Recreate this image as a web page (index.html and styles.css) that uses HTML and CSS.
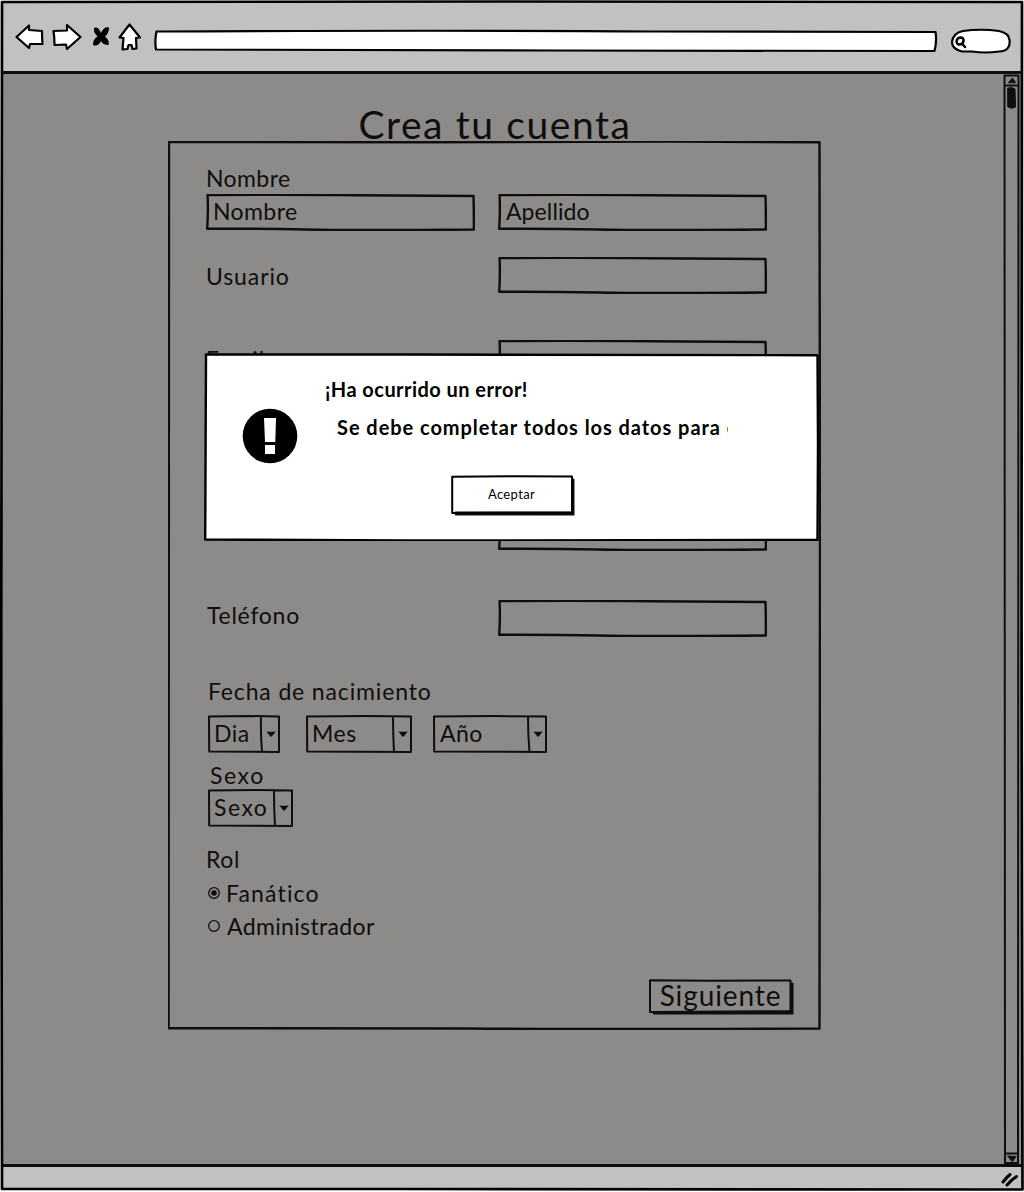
FILE: index.html
```html
<!DOCTYPE html>
<html lang="es">
<head>
<meta charset="utf-8">
<title>Crea tu cuenta</title>
<link rel="stylesheet" href="styles.css">
</head>
<body>
<svg class="defs" width="0" height="0" aria-hidden="true">
  <symbol id="field" viewBox="0 0 269 37" preserveAspectRatio="none">
    <path d="M1.600 1Q90 .6 150 1.200T267.500 2Q268 18 267.800 35.500Q150 36.500 100 35.500T1.200 34.800Q2.300 18 1.600 1Z"/>
  </symbol>
  <symbol id="caret" viewBox="0 0 10 6"><path d="M.3 .4Q5 1.400 9.700.2Q7.500 4 4.800 6Q2.500 3 .3.4Z"/></symbol>
</svg>
<div class="window">
  <svg class="outline" viewBox="0 0 1024 1192" aria-hidden="true">
    <path d="M2 2L500 1.500L1022 2L1021.500 600L1022.500 1189.500Q700 1190.500 400 1189L2 1189L1.200 700L2 2Z"/>
  </svg>
  <header class="toolbar">
    <svg class="nav" width="145" height="40" viewBox="0 0 145 40" aria-label="Navegación">
      <path d="M2.500 20L15 8.500V13L28 14Q28 21 28.500 27H16L15 31Z"/>
      <path d="M39.500 14L53 13.500V8L66.500 20L53 32L52 27.500L40.500 28Q40.500 20 39.500 14Z"/>
      <path class="fill" d="M80 11Q84 9 87 16Q90 9 95 10.500Q95 16 91 19.500Q96 24 94.500 28Q89 28 87 24Q84 30 79 28Q79 22 83.500 19.500Q79 15 80 11Z"/>
      <path d="M115.500 7.500L105.500 20.500L109.500 21L108.500 32.500L113.500 32L114.500 28L117.500 28L118.500 32L122.500 31.500L122 21L126 20.500Z"/>
    </svg>
    <svg class="address" width="786" height="24" viewBox="0 0 786 24" aria-label="Dirección"><path d="M3.500 2.500Q300 1 500 2.500L782.500 3Q784 13 781.500 22L400 21.500L3 20.500Q1.500 12 3.500 2.500Z"/></svg>
    <svg class="search" width="62" height="26" viewBox="0 0 62 26" aria-label="Buscar">
      <path d="M13 3Q31 .5 49 3Q59 5 59.500 12Q61 23 49 23.500Q35 25.500 22 23.500H12Q2 21 2 14Q3 5 13 3Z"/>
      <path class="line" d="M6.500 13.500Q7 9.500 11 9.500Q14 10 13.500 13.500Q12 17 8.500 16.500Q6.500 15.500 6.500 13.500ZM12.500 16L15 19"/>
    </svg>
  </header>
  <main class="page">
    <div class="content">
      <h1>Crea tu cuenta</h1>
      <form class="panel">
        <svg class="sketch" viewBox="0 0 653 889" preserveAspectRatio="none" aria-hidden="true"><path d="M1 .8L250 1.200L500.500.6L651.500 1.200L652 400L651.500 887.500Q400 888.500 300 887.500L.6 887.200L1 .8Z"/></svg>
        <div class="row names">
          <div class="cell"><label>Nombre</label><div class="field"><svg class="sketch"><use href="#field"/></svg>Nombre</div></div>
          <div class="field apellido"><svg class="sketch"><use href="#field"/></svg>Apellido</div>
        </div>
        <div class="row usuario"><label>Usuario</label><div class="field"><svg class="sketch"><use href="#field"/></svg></div></div>
        <div class="row email"><label>Email</label><div class="field"><svg class="sketch"><use href="#field"/></svg></div></div>
        <div class="row password"><div class="field"><svg class="sketch"><use href="#field"/></svg></div></div>
        <div class="row phone"><label>Teléfono</label><div class="field"><svg class="sketch"><use href="#field"/></svg></div></div>
        <label class="birth">Fecha de nacimiento</label>
        <div class="selects">
          <div class="select day"><svg class="sketch" viewBox="0 0 72 38"><path d="M1 1.500L40 1L71 1.500V37L1.200 36.500ZM53 1.500Q52.500 20 54 37"/></svg><span>Dia</span><svg class="caret"><use href="#caret"/></svg></div>
          <div class="select month"><svg class="sketch" viewBox="0 0 106 38"><path d="M1 1.500L60 1L105 1.500V37L1.200 36.500ZM87 1.500Q87 20 88 37"/></svg><span>Mes</span><svg class="caret"><use href="#caret"/></svg></div>
          <div class="select year"><svg class="sketch" viewBox="0 0 114 38"><path d="M1 1.500L60 1L113 1.500V37L1.200 36.500ZM95 1.500Q95 20 96.500 37"/></svg><span>Año</span><svg class="caret"><use href="#caret"/></svg></div>
        </div>
        <label class="sex">Sexo</label>
        <div class="select gender"><svg class="sketch" viewBox="0 0 85 38"><path d="M1 1.500L50 1L84 1.500V37L1.200 36.500ZM66 1.500Q66 20 67 37"/></svg><span>Sexo</span><svg class="caret"><use href="#caret"/></svg></div>
        <label class="role">Rol</label>
        <div class="radio"><svg width="12" height="12" viewBox="0 0 12 12"><circle cx="6" cy="6" r="5.300"/><circle class="dot" cx="6" cy="6" r="2.800"/></svg><label class="fan">Fanático</label></div>
        <div class="radio second"><svg width="12" height="12" viewBox="0 0 12 12"><circle cx="6" cy="6" r="5.300"/></svg><label class="admin">Administrador</label></div>
        <div class="button next"><svg class="sketch" viewBox="0 0 145 36"><path class="shadow" d="M4 32H141V3L144.500 4V35.500H4Z"/><path d="M1 1.200L60 1.800L141.500 1.500V32L1 33Z"/></svg>Siguiente</div>
      </form>
    </div>
    <svg class="scrollbar" width="18" height="1090" viewBox="0 0 18 1090" aria-hidden="true">
      <path d="M1.500 1.500H15.500L15 1089H2ZM1.500 11.500H15M2 1079.500H15"/>
      <path class="fill" d="M5.500 8.500L9.500 4L12.500 8.500ZM5 1082L13 1082.500L9.500 1087.500ZM5 14Q9 12.500 12 15L12.500 33Q9 35.500 5 33Z"/>
    </svg>
  </main>
  <footer class="status">
    <svg width="18" height="16" viewBox="0 0 18 16" aria-hidden="true"><path d="M2 10Q5 6 9 2.500M6 13Q10 8 15.500 4.500"/></svg>
  </footer>
  <section class="dialog" role="alertdialog">
    <svg class="sketch" viewBox="0 0 615 188" preserveAspectRatio="none" aria-hidden="true"><path d="M2 1.500L200 1.500L613.500 2.200L614 90L613.500 187L200 187.500L1.200 186.500L2 1.500Z"/></svg>
    <svg class="alert" width="56" height="56" viewBox="0 0 56 56" aria-hidden="true"><circle cx="28" cy="28" r="27.300"/><path d="M22 10H34L33.300 34H23ZM23 37H33V46H23Z"/></svg>
    <div class="message">
      <strong class="heading">¡Ha ocurrido un error!</strong>
      <strong class="detail">Se debe completar todos los datos para c</strong>
      <div class="button accept"><svg class="sketch" viewBox="0 0 124 41"><path class="shadow" d="M4 36.500H120V3L123.500 4V40.500H4Z"/><path d="M1.200 1.800L60 1.200L121 1.500V37.500L1.200 38Z"/></svg>Aceptar</div>
    </div>
  </section>
</div>
</body>
</html>
```
FILE: styles.css
```css
* { box-sizing: border-box; }
body { margin: 0; background: #fff; color: #0f0e0d; font: 23px/26px Lato, "Open Sans", sans-serif; }
.defs { position: absolute; }
.window { position: relative; width: 1024px; height: 1192px; padding: 1px 1px 2px; display: flex; flex-direction: column; overflow: hidden; }
svg { fill: none; stroke: #0f0e0d; stroke-width: 2.4; stroke-linejoin: round; stroke-linecap: round; flex: none; }
.outline { position: absolute; inset: 0; width: 1024px; height: 1192px; stroke: #000; stroke-width: 2.7; z-index: 1; }
.toolbar { height: 73px; padding: 16px 12px 0 13px; display: flex; background: #c1c1c1; border-bottom: 3px solid #0f0e0d; }
.toolbar svg { fill: #fff; stroke: #000; stroke-width: 2.2; }
.toolbar .fill { fill: #000; stroke: none; }
.toolbar .line { fill: none; stroke-width: 2.4; }
.address { margin: 12px 0 0 -6px; }
.search { margin: 11px 0 0 11px; }
.page { height: 1090px; display: flex; justify-content: space-between; background: #8c8b89; }
.content { width: 653px; margin-left: 167px; }
h1 { margin: 0 0 0 1px; padding-top: 28px; height: 67px; text-align: center; font-size: 39px; font-weight: 400; line-height: 44px; letter-spacing: 1.6px; }
.panel { position: relative; height: 889px; padding: 24px 27px 0 38px; display: flex; flex-direction: column; }
.sketch { position: absolute; inset: 0; width: 100%; height: 100%; z-index: 0; }
label { display: block; letter-spacing: .4px; white-space: nowrap; }
.row { display: flex; justify-content: space-between; width: 561px; height: 37px; flex: none; }
.names { height: 66px; align-items: flex-end; }
.names .cell { height: 66px; display: flex; flex-direction: column; justify-content: space-between; }
.field { position: relative; width: 269px; height: 37px; padding: 4px 7px; letter-spacing: .4px; }
.apellido { padding-left: 8px; letter-spacing: .1px; }
.usuario { margin-top: 26px; }
.usuario label { padding-top: 6px; letter-spacing: .9px; }
.email { margin-top: 46px; }
.email label { padding-top: 6px; letter-spacing: 1px; }
.password { margin-top: 137px; justify-content: flex-end; }
.phone { margin-top: 49px; }
.phone label { padding: 2px 0 0 1px; letter-spacing: .75px; }
.birth { margin: 41px 0 0 2px; letter-spacing: .85px; }
.selects { display: flex; margin: 11px 0 0 2px; }
.select { position: relative; height: 38px; padding: 5px 4px 0 6px; display: flex; justify-content: space-between; flex: none; letter-spacing: .5px; }
.select .sketch { stroke-width: 2; }
.day { width: 72px; }
.month { width: 106px; margin-left: 26px; }
.year { width: 114px; margin-left: 21px; padding-left: 7px; }
.select .caret { width: 10px; height: 6px; margin: 11px 0 0 -4px; fill: #0f0e0d; stroke: none; }
.sex { margin: 9px 0 0 4px; letter-spacing: 1.6px; }
.gender { width: 85px; margin: 1px 0 0 2px; letter-spacing: 1.5px; }
.role { margin-top: 19px; letter-spacing: .7px; }
.radio { display: flex; align-items: center; gap: 6px; margin: 8px 0 0 2px; }
.radio svg { stroke-width: 1.3; }
.radio .dot { fill: #0f0e0d; stroke: none; }
.fan { letter-spacing: 1.15px; }
.second { margin-top: 7px; }
.second label { margin-left: 1px; letter-spacing: .35px; }
.button { position: relative; text-align: center; }
.button .sketch { stroke-width: 2; }
.button .shadow { fill: #0f0e0d; stroke: none; }
.next { width: 145px; height: 36px; margin-top: 40px; align-self: flex-end; padding: 0 2px 0 0; font-size: 28px; line-height: 32px; letter-spacing: .9px; }
.scrollbar { margin-right: 2px; stroke-width: 2; }
.scrollbar .fill { fill: #0f0e0d; stroke-width: 1; }
.status { height: 26px; background: #c1c1c1; border-top: 3px solid #0f0e0d; display: flex; justify-content: flex-end; padding: 5px 4px 0; }
.status svg { stroke: #000; stroke-width: 3; }
.dialog { position: absolute; z-index: 2; left: 204px; top: 353px; width: 615px; height: 188px; padding: 23px 0 0 38px; display: flex; color: #000; }
.dialog svg { stroke: #000; }
.dialog > .sketch { fill: #fff; }
.dialog .alert { position: relative; margin-top: 32px; fill: #000; stroke: none; }
.alert path { fill: #fff; }
.message { position: relative; display: flex; flex-direction: column; margin-left: 27px; font-size: 20px; }
.heading { letter-spacing: .45px; }
.detail { margin: 12px 0 0 12px; width: 391px; overflow: hidden; white-space: nowrap; letter-spacing: .95px; }
.accept { width: 124px; height: 41px; margin: 35px 0 0 126px; padding: 6px 3px 0 0; font-size: 13px; letter-spacing: .35px; }
```
